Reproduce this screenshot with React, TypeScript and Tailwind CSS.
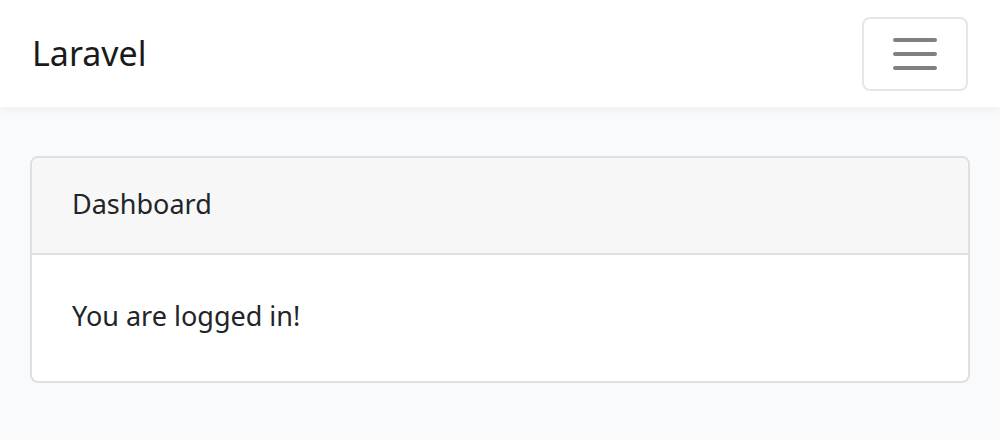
export default function App() {
  return (
    <div className="min-h-[440px] bg-[#f8fafc] text-[#212529] font-['Noto_Sans',sans-serif]">
      <nav className="flex h-[107px] items-center justify-between bg-white pl-[32px] pr-[32px] shadow-[0_4px_8px_rgba(0,0,0,0.04)]">
        <a href="#" className="pb-[2px] text-[34px] leading-[48px] text-[#1a1a1a]">
          Laravel
        </a>
        <button
          type="button"
          aria-label="Toggle navigation"
          className="flex h-[74px] w-[106px] items-center justify-center rounded-[8px] border-2 border-[#e6e6e6] bg-white"
        >
          <svg width="44" height="34" viewBox="0 0 44 34">
            <g stroke="#808080" strokeWidth="4" strokeLinecap="round">
              <line x1="2" y1="3" x2="42" y2="3" />
              <line x1="2" y1="17" x2="42" y2="17" />
              <line x1="2" y1="31" x2="42" y2="31" />
            </g>
          </svg>
        </button>
      </nav>

      <main className="px-[30px] pt-[49px]">
        <div className="rounded-[8px] border-2 border-[#dfdfdf] bg-white">
          <div className="rounded-t-[6px] border-b-2 border-[#dfdfdf] bg-[#f7f7f7] px-[40px] pb-[26px] pt-[22px] text-[27px] leading-[47px]">
            Dashboard
          </div>
          <div className="px-[40px] pb-[42px] pt-[38px] text-[27px] leading-[46px]">
            You are logged in!
          </div>
        </div>
      </main>
    </div>
  );
}
